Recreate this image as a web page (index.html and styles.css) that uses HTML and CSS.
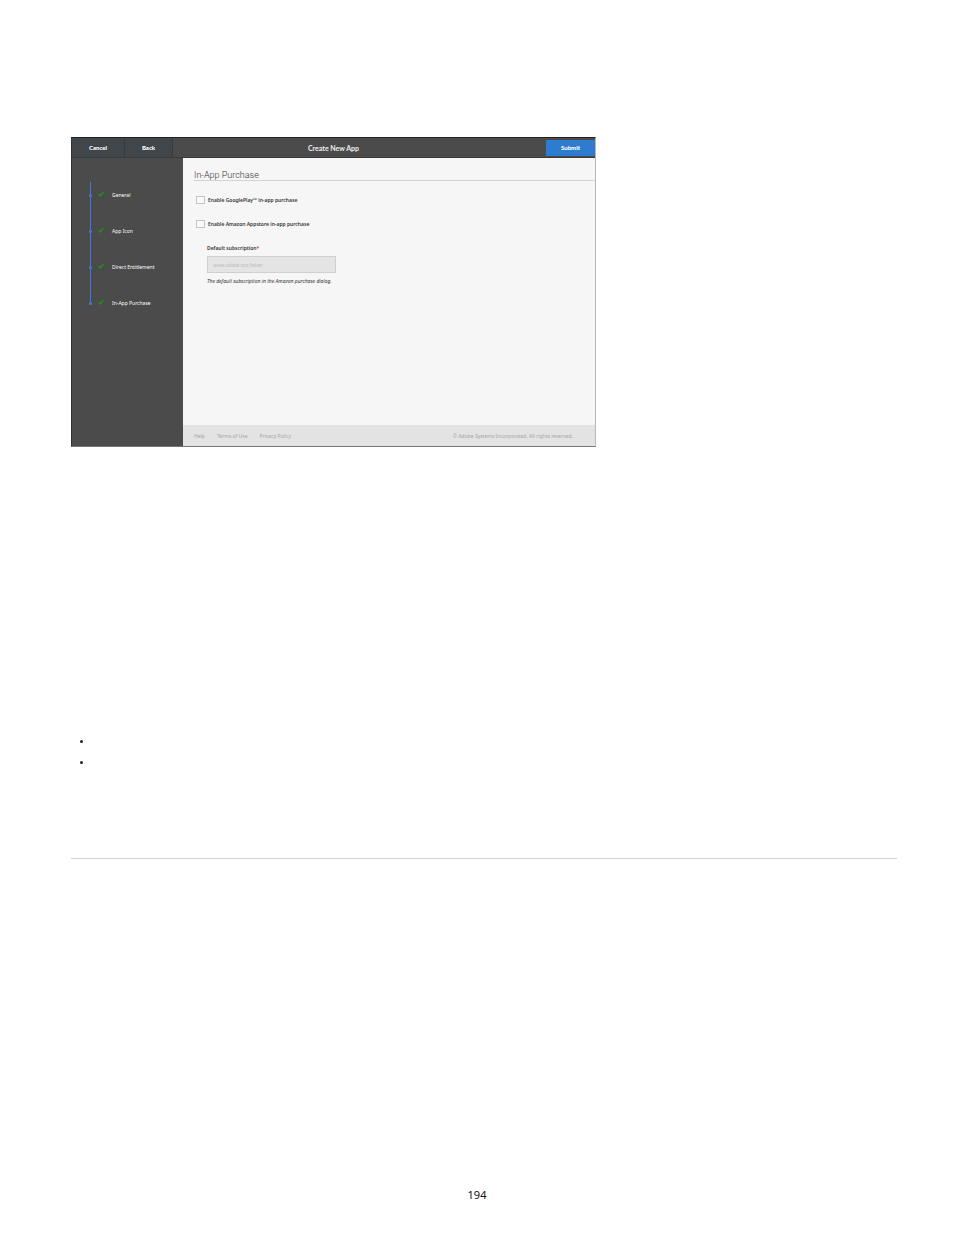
FILE: index.html
```html
<!DOCTYPE html>
<html lang="en">
<head>
    <meta charset="UTF-8" />
    <title>Create New App</title>
    <link rel="stylesheet" href="styles.css">
</head>
<body>
    <main class="page">
        <form class="app">
            <header class="topbar">
                <div class="topbar-left">
                    <button type="button" class="nav-btn">Cancel</button>
                    <button type="button" class="nav-btn">Back</button>
                </div>
                <h1>Create New App</h1>
                <button type="submit" class="submit-btn">Submit</button>
            </header>

            <div class="body">
                <nav class="sidebar">
                    <ol class="steps">
                        <li><svg class="check" viewBox="0 0 6 6"><path d="M0.6 3.4 L2.2 4.8 L5.4 1" /></svg>General</li>
                        <li><svg class="check" viewBox="0 0 6 6"><path d="M0.6 3.4 L2.2 4.8 L5.4 1" /></svg>App Icon</li>
                        <li><svg class="check" viewBox="0 0 6 6"><path d="M0.6 3.4 L2.2 4.8 L5.4 1" /></svg>Direct Entitlement</li>
                        <li><svg class="check" viewBox="0 0 6 6"><path d="M0.6 3.4 L2.2 4.8 L5.4 1" /></svg>In-App Purchase</li>
                    </ol>
                </nav>

                <div class="panel">
                    <section class="content">
                        <h2>In-App Purchase</h2>
                        <label class="option"><input type="checkbox" />Enable GooglePlay™ in-app purchase</label>
                        <label class="option"><input type="checkbox" />Enable Amazon Appstore in-app purchase</label>
                        <div class="field">
                            <label for="subscription">Default subscription<span class="required">*</span></label>
                            <input type="text" id="subscription" placeholder="www.adobe.xyz/token" disabled />
                            <p class="hint">The default subscription in the Amazon purchase dialog.</p>
                        </div>
                    </section>
                    <footer class="footer">
                        <a href="#">Help</a>
                        <a href="#">Terms of Use</a>
                        <a href="#">Privacy Policy</a>
                        <span class="copyright">© Adobe Systems Incorporated. All rights reserved.</span>
                    </footer>
                </div>
            </div>
        </form>

        <ul class="notes">
            <li></li>
            <li></li>
        </ul>

        <hr />

        <p class="page-number">194</p>
    </main>
</body>
</html>
```

FILE: styles.css
```css
* {
    margin: 0;
    padding: 0;
    box-sizing: border-box;
}

body {
    background: #fff;
    font-family: "Noto Sans", "Open Sans", sans-serif;
}

.page {
    padding: 137px 57px 32px 71px;
}

.app {
    max-width: 525px;
    font-size: 5px;
    line-height: 10px;
    border: 1px solid #767676;
    border-top-color: #222;
    border-left-color: #333;
    border-right-color: #b8b8b8;
}

/* top bar */
.topbar {
    display: grid;
    grid-template-columns: 1fr auto 1fr;
    align-items: center;
    height: 20px;
    background: #4b4b4b;
    border-bottom: 1px solid #3c3c3c;
}

.topbar-left {
    display: flex;
    align-self: stretch;
}

button {
    border: none;
    color: #fff;
    font-family: Lato, sans-serif;
    font-weight: 900;
    font-size: 6px;
    cursor: pointer;
}

.nav-btn {
    width: 48px;
    background: #40464a;
    border-right: 1px solid #373b3e;
}

.nav-btn:first-child {
    width: 53px;
}

.topbar h1 {
    color: #f0f0f0;
    font-family: Lato, sans-serif;
    font-size: 7px;
    font-weight: 700;
}

.submit-btn {
    justify-self: end;
    width: 49px;
    height: 16px;
    background: #2f7bd0;
}

/* steps */
.body {
    display: flex;
    min-height: 288px;
}

.sidebar {
    width: 111px;
    padding: 24px 0 0 18px;
    background: #4b4b4b;
}

.steps {
    position: relative;
    display: flex;
    flex-direction: column;
    gap: 26px;
    padding-top: 8px;
    list-style: none;
    color: #fff;
}

.steps::before {
    content: "";
    position: absolute;
    top: 0;
    bottom: 4px;
    left: 0;
    width: 1px;
    background: #3f7ad8;
}

.steps li {
    display: flex;
    align-items: center;
}

.steps li::before {
    content: "";
    width: 3px;
    height: 3px;
    margin-left: -1px;
    border-radius: 50%;
    background: #3f7ad8;
}

.check {
    width: 6px;
    height: 6px;
    margin: 0 8px 2px 6px;
    fill: none;
    stroke: #1f8f1f;
    stroke-width: 1.6;
}

/* main panel */
.panel {
    flex: 1;
    display: flex;
    flex-direction: column;
    background: #f6f6f6;
}

.content {
    flex: 1;
    padding: 13px 0 0 11px;
}

.content h2 {
    margin-bottom: 14px;
    border-bottom: 1px solid #d3d3d3;
    color: #333;
    font-family: Roboto, sans-serif;
    font-size: 9px;
    line-height: 9px;
    font-weight: 300;
}

.option {
    display: flex;
    align-items: center;
    gap: 3px;
    margin: 0 0 14px 2px;
    color: #333;
    font-weight: 600;
}

.option input {
    appearance: none;
    width: 9px;
    height: 8px;
    border: 1px solid #c4c4c4;
    background: #fafafa;
}

.field {
    padding-left: 13px;
    color: #333;
}

.field label {
    display: block;
    font-weight: 600;
}

.required {
    color: #e0243c;
}

.field input {
    display: block;
    width: 129px;
    height: 17px;
    margin: 3px 0;
    padding: 0 5px;
    border: 1px solid #cfcfcf;
    background: #e4e4e4;
    font-family: Lato, sans-serif;
    font-size: 5px;
}

.field input::placeholder {
    color: #bcbcbc;
}

.hint {
    font-style: italic;
}

.footer {
    display: flex;
    align-items: center;
    gap: 12px;
    height: 21px;
    padding: 0 22px 0 11px;
    background: #e3e3e3;
    color: #a5a5a5;
}

.footer a {
    color: inherit;
    text-decoration: none;
}

.copyright {
    margin-left: auto;
}

/* rest of the page */
.notes {
    margin-top: 284px;
    list-style: none;
}

.notes li {
    height: 21px;
    padding: 9px 0 0 9px;
}

.notes li::before {
    content: "";
    display: block;
    width: 3px;
    height: 3px;
    border-radius: 50%;
    background: #222;
}

hr {
    margin-top: 85px;
    border: none;
    border-top: 1px solid #d3d3d3;
}

.page-number {
    margin-top: 328px;
    padding-right: 14px;
    color: #111;
    font-size: 11px;
    line-height: 16px;
    text-align: center;
}
```
